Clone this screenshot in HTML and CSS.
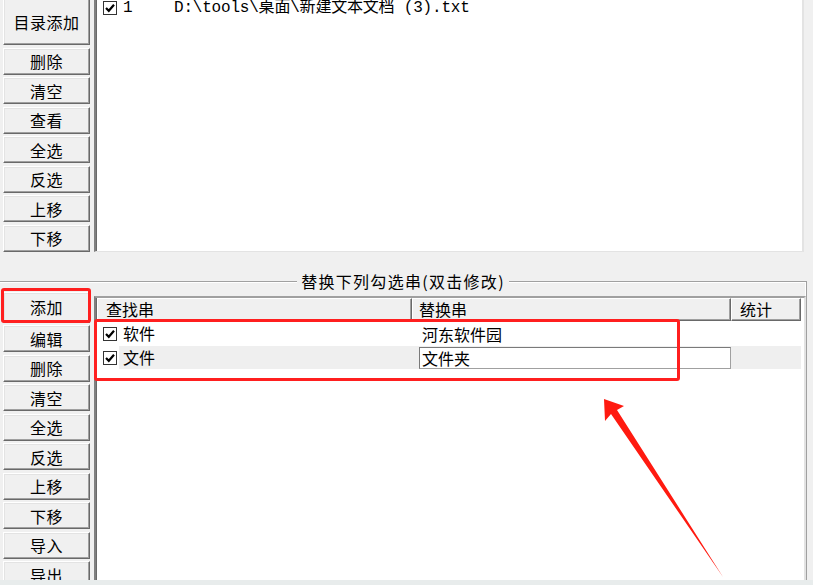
FILE: index.html
```html
<!DOCTYPE html>
<html lang="zh-CN">
<head>
    <meta charset="UTF-8">
    <title>批量替换</title>
    <link rel="stylesheet" href="styles.css">
</head>
<body>
    <div class="window">
        <div class="top">
            <div class="side">
                <button class="btn tall">目录添加</button>
                <button class="btn">删除</button>
                <button class="btn">清空</button>
                <button class="btn">查看</button>
                <button class="btn">全选</button>
                <button class="btn">反选</button>
                <button class="btn">上移</button>
                <button class="btn">下移</button>
            </div>
            <div class="listbox">
                <div class="lrow">
                    <svg class="chk" width="14" height="14" viewBox="0 0 14 14"><rect x="0.5" y="0.5" width="13" height="13" fill="#fff" stroke="#333"/><path d="M3 7 L5.8 9.8 L11 3.8" fill="none" stroke="#000" stroke-width="2.2"/></svg>
                    <span class="num">1</span>
                    <span class="path">D:\tools\桌面\新建文本文档 (3).txt</span>
                </div>
            </div>
        </div>

        <div class="group">
            <div class="legend"><span>替换下列勾选串(双击修改)</span></div>
            <div class="bottom">
                <div class="side">
                    <button class="btn first">添加</button>
                    <button class="btn">编辑</button>
                    <button class="btn">删除</button>
                    <button class="btn">清空</button>
                    <button class="btn">全选</button>
                    <button class="btn">反选</button>
                    <button class="btn">上移</button>
                    <button class="btn">下移</button>
                    <button class="btn">导入</button>
                    <button class="btn">导出</button>
                </div>
                <div class="table">
                    <div class="thead">
                        <div class="th c1">查找串</div>
                        <div class="th c2">替换串</div>
                        <div class="th c3">统计</div>
                    </div>
                    <div class="trow">
                        <div class="td c1">
                            <svg class="chk" width="14" height="14" viewBox="0 0 14 14"><rect x="0.5" y="0.5" width="13" height="13" fill="#fff" stroke="#333"/><path d="M3 7 L5.8 9.8 L11 3.8" fill="none" stroke="#000" stroke-width="2.2"/></svg>
                            <span class="find">软件</span>
                        </div>
                        <div class="td c2"><span class="repl">河东软件园</span></div>
                        <div class="td c3"></div>
                    </div>
                    <div class="trow sel">
                        <div class="td c1">
                            <svg class="chk" width="14" height="14" viewBox="0 0 14 14"><rect x="0.5" y="0.5" width="13" height="13" fill="#fff" stroke="#333"/><path d="M3 7 L5.8 9.8 L11 3.8" fill="none" stroke="#000" stroke-width="2.2"/></svg>
                            <span class="find">文件</span>
                        </div>
                        <div class="td c2"><span class="edit">文件夹</span></div>
                        <div class="td c3"></div>
                    </div>
                </div>
            </div>
        </div>
    </div>
    <div class="footer"></div>

    <div class="mark mark-add"></div>
    <div class="mark mark-rows"></div>
    <svg class="arrow" width="813" height="585" viewBox="0 0 813 585">
        <polygon points="604,399 624,406 617,410 723,577 611,414 605,421" fill="#ff1a10"/>
    </svg>
</body>
</html>
```

FILE: styles.css
```css
body {
    margin: 0;
    width: 813px;
    height: 585px;
    overflow: hidden;
    position: relative;
    background-color: #f0f0f0;
    font-family: "Noto Sans CJK SC", sans-serif;
    font-size: 16px;
    color: #000;
}

.window {
    height: 580px;
    overflow: hidden;
}

.footer {
    height: 5px;
    background-color: #e8ecec;
}

.top {
    display: flex;
    gap: 4px;
    padding-left: 3px;
    margin-top: -16px;
    height: 267px;
}

.side {
    width: 87px;
    display: flex;
    flex-direction: column;
    gap: 2.5px;
    flex-shrink: 0;
}

.btn {
    height: 27px;
    padding: 0;
    margin: 0;
    font-family: "Noto Sans CJK SC", sans-serif;
    font-size: 16px;
    line-height: 1;
    letter-spacing: 0.5px;
    color: #000;
    background-color: #f0f0f0;
    border: 1px solid;
    border-color: #ffffff #696969 #696969 #ffffff;
    box-shadow: inset -1px -1px 0 #a0a0a0, inset 1px 1px 0 #e3e3e3;
    flex-shrink: 0;
}

.btn.tall {
    height: 61px;
    padding-top: 14px;
}

.btn.first {
    height: 30.5px;
}

.listbox {
    width: 706px;
    height: 265px;
    background: #fff;
    border-style: solid;
    border-width: 2px 2px 1px 2px;
    border-color: #a0a0a0 #e3e3e3 #e3e3e3 #808080;
    box-shadow: inset 1px 0 0 #696969;
}

.lrow {
    display: flex;
    align-items: center;
    height: 18px;
    margin-top: 13px;
    padding-left: 7px;
}

.chk {
    flex-shrink: 0;
    display: block;
}

.num {
    font-family: "Liberation Mono", "Noto Sans CJK SC", monospace;
    font-size: 16px;
    line-height: 18px;
    margin-left: 6px;
    width: 51px;
}

.path {
    font-family: "Liberation Mono", "Noto Sans CJK SC", monospace;
    font-size: 16px;
    line-height: 18px;
    letter-spacing: -0.2px;
}

.group {
    margin-top: 30px;
    margin-left: -2px;
    width: 808px;
    border-top: 1px solid #a0a0a0;
    border-right: 1px solid #a0a0a0;
    box-shadow: inset 0 1px 0 #fff, inset -1px 0 0 #fff;
    height: 300px;
}

.legend {
    display: flex;
    justify-content: center;
    height: 0;
    margin-left: 2px;
}

.legend span {
    background: #f0f0f0;
    padding: 0 4px;
    line-height: 20px;
    letter-spacing: 1.3px;
    margin-top: -11px;
    height: 20px;
}

.bottom {
    display: flex;
    gap: 4px;
    padding-left: 5px;
    padding-top: 10px;
}

.table {
    width: 708px;
    height: 290px;
    margin-top: 4px;
    background: #fff;
    border-style: solid;
    border-width: 2px 2px 1px 2px;
    border-color: #a0a0a0 #e3e3e3 #e3e3e3 #808080;
    box-shadow: inset 1px 0 0 #696969;
    padding-left: 1px;
}

.thead {
    display: flex;
    height: 23px;
}

.th {
    box-sizing: border-box;
    height: 23px;
    line-height: 20px;
    padding-left: 8px;
    background: #f0f0f0;
    border: 1px solid;
    border-color: #ffffff #696969 #696969 #ffffff;
    box-shadow: inset -1px -1px 0 #a0a0a0;
}

.th.c1 { width: 315px; }
.th.c2 { width: 319px; padding-left: 6px; }
.th.c3 { width: 70px; }

.trow {
    display: flex;
    height: 23px;
    margin-top: 1px;
}

.td {
    display: flex;
    align-items: center;
    height: 23px;
}

.td.c1 {
    width: 315px;
    padding-left: 6px;
    box-sizing: border-box;
}

.td.c2 {
    width: 319px;
    padding-left: 7px;
    box-sizing: border-box;
}

.td.c3 {
    width: 70px;
}

.find {
    margin-left: 2px;
    padding-left: 4px;
    line-height: 23px;
    height: 23px;
}

.trow.sel .find {
    flex: 1;
    background: #efefef;
}

.trow.sel .c2,
.trow.sel .c3 {
    background: #efefef;
}

.repl {
    margin-left: 3px;
    line-height: 22px;
}

.edit {
    display: block;
    box-sizing: border-box;
    width: 313px;
    height: 22px;
    line-height: 20px;
    padding-left: 2px;
    background: #fff;
    border: 1px solid #7a7a7a;
    border-right-color: #a0a0a0;
    border-bottom-color: #a0a0a0;
}

.mark {
    position: absolute;
    border: 3px solid #ff1f1f;
    border-radius: 3px;
    box-sizing: border-box;
}

.mark-add {
    left: 1px;
    top: 288px;
    width: 90px;
    height: 35px;
}

.mark-rows {
    left: 94px;
    top: 319px;
    width: 586px;
    height: 62px;
}

.arrow {
    position: absolute;
    left: 0;
    top: 0;
}
```
